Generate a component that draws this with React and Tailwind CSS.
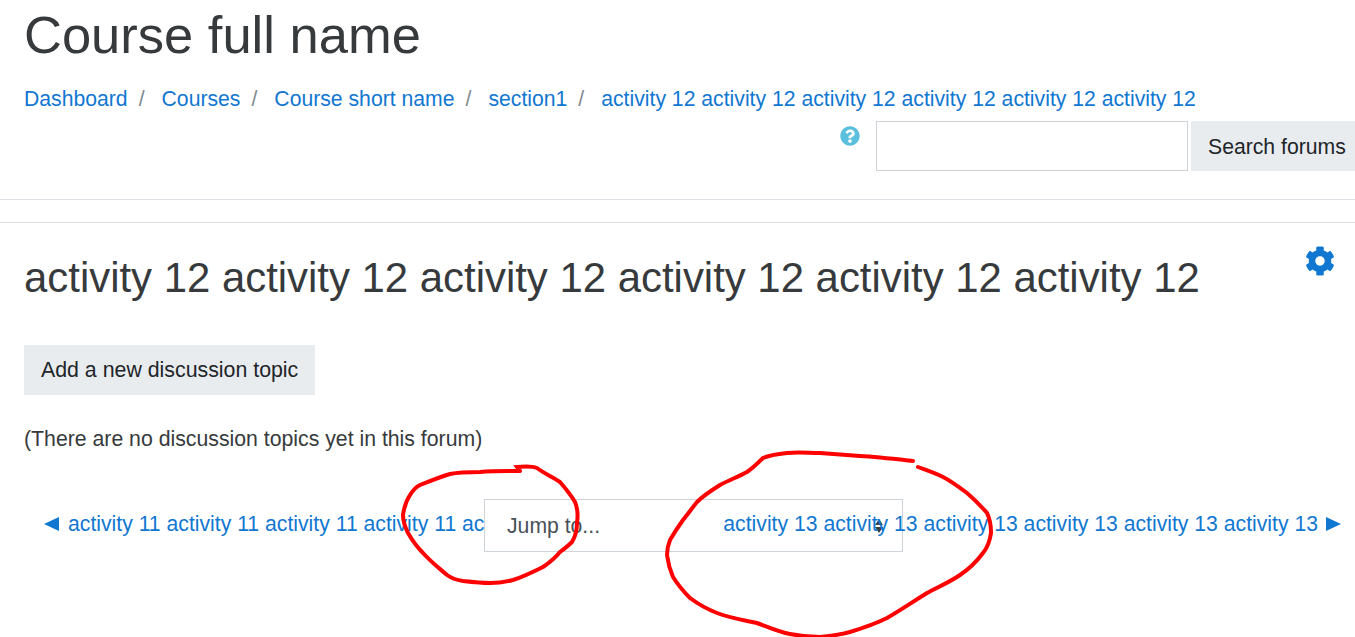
import { FaCog, FaQuestionCircle } from "react-icons/fa"

const crumbs = ["Dashboard", "Courses", "Course short name", "section1"]
const current = "activity 12 activity 12 activity 12 activity 12 activity 12 activity 12"
const prev = "activity 11 activity 11 activity 11 activity 11 activity 11 activity 11"
const next = "activity 13 activity 13 activity 13 activity 13 activity 13 activity 13"

function Scribbles() {
  return (
    <svg className="absolute left-0 top-0 pointer-events-none z-20" width="1355" height="637" viewBox="0 0 1355 637" fill="none">
      <path
        d="M520 471 L517 467 C527 466 532 466 537 468 C545 474 553 477 560 482 C566 489 571 495 575 502 C578 509 578 516 577 523 C577 530 575 537 572 542 C568 546 564 549 560 552 C555 558 549 563 543 567 C533 572 523 577 513 580 C505 582 498 583 490 583 C481 583 472 582 463 581 C457 580 451 578 447 575 C439 568 431 562 423 553 C417 547 412 540 408 533 C405 527 403 521 403 515 C404 508 406 501 410 495 C413 490 416 487 420 485 C430 481 440 477 450 474 C460 472 470 472 480 472 C493 471 506 471 520 471"
        stroke="#ff0000"
        strokeWidth="4"
        strokeLinecap="round"
      />
      <path
        d="M913 461 C895 459 878 457 860 456 C847 455 833 454 820 453 C809 453 798 452 787 453 C778 454 770 455 763 458 C758 463 753 468 747 472 C738 477 729 480 720 485 C712 490 704 495 697 502 C692 508 688 514 683 520 C678 527 674 533 670 540 C668 545 667 550 667 555 C668 563 670 570 673 577 C678 585 684 592 690 598 C698 604 707 609 717 613 C730 618 743 620 757 623 C768 627 779 632 790 634 C800 636 810 637 820 637 C830 636 840 635 850 632 C863 628 875 624 887 618 C901 610 914 601 927 593 C938 587 950 582 960 575 C969 569 977 561 983 553 C988 547 990 540 991 533 C991 526 990 519 987 513 C981 506 974 499 967 493 C959 487 951 481 943 477 C935 473 926 470 918 467"
        stroke="#ff0000"
        strokeWidth="4"
        strokeLinecap="round"
      />
    </svg>
  )
}

export default function App() {
  return (
    <div className="relative w-[1355px] h-[637px] overflow-hidden bg-white text-[#373a3c] text-[21.2px] font-['Liberation_Sans',Arial,sans-serif]">
      <header className="h-[199px] border-b border-[#dee2e6] box-content">
        <h1 className="pl-6 pt-[4px] text-[52.5px] leading-[62px]">Course full name</h1>
        <nav className="pl-6 pt-[18px] h-[47px] flex items-center text-[#1177d1] leading-[30px]">
          {crumbs.map((c) => (
            <span key={c} className="flex">
              <a>{c}</a>
              <span className="text-[#818a91] pl-[11px] pr-[17px]">/</span>
            </span>
          ))}
          <a>{current}</a>
        </nav>
        <div className="flex justify-end mt-[8px]">
          <FaQuestionCircle className="text-[#5bc0de] mt-[5px] mr-[16px]" size={20} />
          <div className="w-[312px] h-[50px] border border-[#ced4da]" />
          <button className="ml-[3px] w-[164px] h-[50px] pt-[1px] bg-[#e9ecef] text-[#212529] pl-[17px] text-left whitespace-nowrap">Search forums</button>
        </div>
      </header>

      <div className="mt-[22px] border-t border-[#dee2e6] px-6 relative">
        <div className="flex justify-between">
          <h2 className="text-[41.9px] leading-[48px] pt-[31px]">{current}</h2>
          <FaCog className="text-[#1177d1] mt-[23px] mr-[-4px]" size={30} />
        </div>
        <button className="mt-[43px] h-[50px] pt-[2px] px-[17px] bg-[#e9ecef] text-[#212529] text-[21.33px] block">Add a new discussion topic</button>
        <p className="mt-[29px] leading-[30px] text-[21.25px]">(There are no discussion topics yet in this forum)</p>

        <div className="relative mt-[45px] flex h-[53px]">
          <div className="w-[460px] overflow-hidden whitespace-nowrap text-[#1177d1] pl-[20px] pt-[10px] leading-[30px] flex items-center self-start">
            <svg className="shrink-0 mr-[8px]" width="16" height="16" viewBox="0 0 16 16" fill="#1177d1"><path d="M0 8 L15 1 V15 Z" /></svg>
            {prev}
          </div>
          <div className="w-[419px] h-[53px] border border-[#ced4da] bg-white relative">
            <span className="absolute left-[22px] top-[11px] leading-[30px] text-[#495057]">Jump to...</span>
            <svg className="absolute left-[389px] top-[18px]" width="10" height="16" viewBox="0 0 10 16" fill="#3a3f44">
              <path d="M5 1 L9 7 H1 Z" />
              <path d="M5 15 L9 9 H1 Z" />
            </svg>
          </div>
          <div className="absolute right-[-10px] top-[10px] whitespace-nowrap text-[#1177d1] leading-[30px] z-10 flex items-center">
            {next}
            <svg className="shrink-0 ml-[8px]" width="15" height="16" viewBox="0 0 15 16" fill="#1177d1"><path d="M15 8 L0 1 V15 Z" /></svg>
          </div>
        </div>
      </div>

      <Scribbles />
    </div>
  )
}
